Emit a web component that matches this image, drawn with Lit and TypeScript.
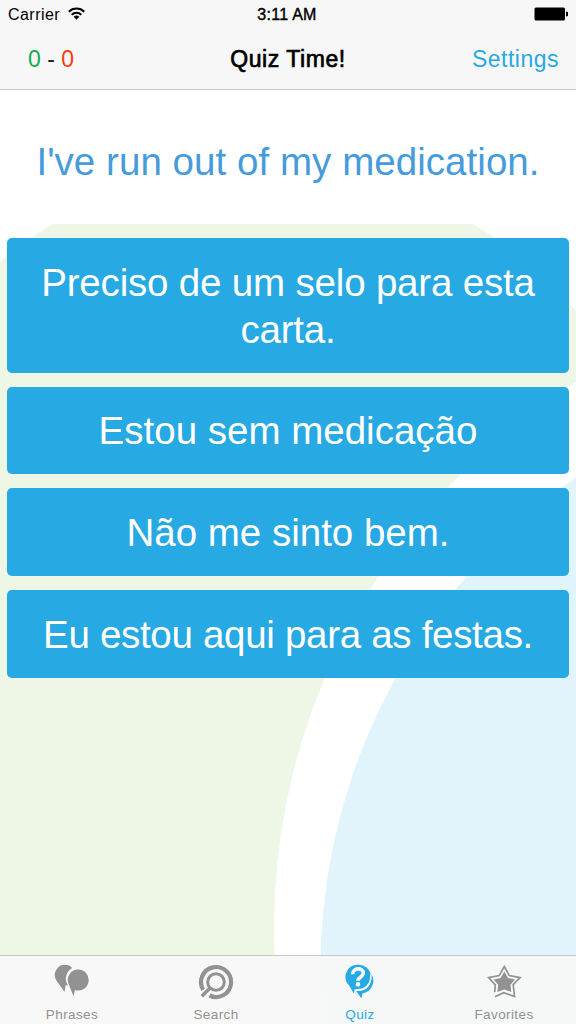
import { LitElement, html, svg, css } from "lit";
import { customElement, property, state } from "lit/decorators.js";
import { classMap } from "lit/directives/class-map.js";
import { styleMap } from "lit/directives/style-map.js";

const icons: Record<string, unknown> = {
  phrases: svg`
    <path d="M11.300 .8c3 0 5.300 1.200 6.900 3.300A12.300 12.300 0 0 0 13.900 21.600l-2.400-.3-.9 6.700L2.700 17A10.300 10.300 0 0 1 11.300 .8z" />
    <path d="M24.300 5.500a10.500 10.500 0 1 1-3.300 20.500L19.500 32.300 14.900 20.800A10.500 10.500 0 0 1 24.300 5.500z" />
  `,
  search: svg`
    <g fill="none" stroke="currentColor">
      <path stroke-width="4.200" d="M5.200 25.800A15 15 0 1 1 11.400 31.500" />
      <circle cx="18" cy="18" r="8.300" stroke-width="3" />
      <path stroke-width="3.600" d="M12.600 23.400L3.800 32.200" />
    </g>
  `,
  quiz: svg`
    <path d="M16 .8a12 12 0 0 1 1.800 24l-5 .5-1 4.200L7 21.200A12 12 0 0 1 16 .8z" />
    <path d="M29.500 10.200A12.500 12.500 0 0 1 20.600 29.200l-1.200 5.200-5.200-7.400C25 28 30.500 20 29.500 10.200z" />
    <g fill="none" stroke="#f6f8f9">
      <path stroke-width="3.600" d="M10.600 10.300c0-7.200 10.800-7 10.700-1-.1 4-5.300 3.300-5.300 7.400" />
      <path stroke-width="1.200" d="M28.600 10.500c1 8.500-4.500 15.500-14.500 16" />
    </g>
    <circle cx="16" cy="20.400" r="2.300" fill="#f6f8f9" />
  `,
  favorites: svg`
    <path
      fill="none"
      stroke="currentColor"
      stroke-width="1.700"
      d="M8.700 28.200L9.300 20.800 2.600 13.600l10.600-2L18.300 2.500l5 9.100 10.800 2-6.900 7 1.300 11.900-10.800-3.800L9 32.800"
    />
    <path d="M18.300 7.500l3.700 6.600 7 1.500-4.500 5.200.8 7.100-7-2.400-6.900 2.400.8-7.100-4.600-5.200 7-1.500z" />
  `,
};

@customElement("status-bar")
export class StatusBar extends LitElement {
  static styles = css`
    :host {
      display: grid;
      grid-template-columns: 1fr auto 1fr;
      align-items: center;
      height: 29px;
      padding: 0 8px;
      font-size: 16px;
      color: #000;
    }

    .carrier {
      display: flex;
      align-items: center;
      gap: 8px;
      letter-spacing: 0.45px;
    }

    .time {
      margin-right: 2px;
      letter-spacing: 0.25px;
      -webkit-text-stroke: 0.4px #000;
    }

    .wifi {
      width: 17px;
      height: 13px;
      margin-top: -2px;
    }

    .battery {
      justify-self: end;
      width: 34px;
      height: 14px;
      margin-top: -1px;
    }
  `;

  render() {
    return html`
      <div class="carrier">
        <span>Carrier</span>
        <svg class="wifi" viewBox="0 0 17 13">
          <g fill="none" stroke="#000" stroke-width="2">
            <path d="M.8 4.700a11 11 0 0 1 15.400 0" />
            <path d="M3.700 7.700a6.900 6.900 0 0 1 9.600 0" />
          </g>
          <path d="M5.700 9.800a4 4 0 0 1 5.600 0L8.500 12.700z" />
        </svg>
      </div>
      <span class="time">3:11 AM</span>
      <svg class="battery" viewBox="0 0 34 14">
        <rect x=".5" y=".5" width="30.500" height="13" rx="1.500" />
        <path d="M32 4.500a2.500 2.500 0 0 1 0 5z" />
      </svg>
    `;
  }
}

@customElement("tab-item")
export class TabItem extends LitElement {
  static styles = css`
    :host {
      flex: 1;
    }

    .tab {
      display: flex;
      flex-direction: column;
      align-items: center;
      width: 100%;
      height: 100%;
      padding: 8px 0 0;
      border: none;
      background: transparent;
      color: #929292;
      font: inherit;
      font-size: 13.5px;
      letter-spacing: 0.4px;
      cursor: pointer;
    }

    .tab.active {
      color: #27a9e3;
    }

    .icon {
      width: 36px;
      height: 36px;
      fill: currentColor;
    }

    .label {
      margin-top: 7px;
      line-height: 16px;
    }
  `;

  @property() name = "";
  @property() icon = "";
  @property({ type: Boolean }) active = false;

  render() {
    return html`
      <button class=${classMap({ tab: true, active: this.active })}>
        <svg class="icon" viewBox="0 0 36 36">${icons[this.icon]}</svg>
        <span class="label">${this.name}</span>
      </button>
    `;
  }
}

@customElement("app-root")
export class AppRoot extends LitElement {
  static styles = css`
    :host {
      display: flex;
      flex-direction: column;
      position: relative;
      isolation: isolate;
      height: 100vh;
      overflow: hidden;
      background: #fff;
      font-family: "Liberation Sans", Arial, sans-serif;
    }

    .backdrop {
      position: absolute;
      inset: 0;
      z-index: -1;
      width: 576px;
      height: 1024px;
    }

    .top {
      box-sizing: border-box;
      height: 90px;
      border-bottom: 1px solid #c9c9c9;
      background: #f7f7f7;
    }

    .nav {
      display: grid;
      grid-template-columns: 1fr auto 1fr;
      align-items: center;
      height: 60px;
      padding: 0 17px 0 28px;
      font-size: 23px;
    }

    .score {
      color: #222;
    }

    .right {
      color: #12ad4b;
    }

    .wrong {
      color: #ff3a10;
    }

    .title {
      margin: 0 11px 0 0;
      font-size: 23px;
      font-weight: normal;
      letter-spacing: 0.55px;
      -webkit-text-stroke: 0.7px #000;
    }

    .settings {
      justify-self: end;
      color: #27a9e3;
      letter-spacing: 0.5px;
    }

    .question {
      display: flex;
      align-items: center;
      justify-content: center;
      height: 134px;
      padding-top: 10px;
      box-sizing: border-box;
      background: rgb(255 255 255 / 0.94);
      color: #459bdb;
      font-size: 38.5px;
      letter-spacing: 0.05px;
    }

    .answers {
      display: flex;
      flex-direction: column;
      flex: 1;
      gap: 14px;
      padding: 14px 7px;
    }

    .answer {
      padding: 21.8px 28px 19.2px;
      border: none;
      border-radius: 5px;
      background: #27a9e3;
      color: #fff;
      font: inherit;
      font-size: 38.5px;
      line-height: 46.8px;
      text-align: center;
      cursor: pointer;
    }

    .tabs {
      display: flex;
      box-sizing: border-box;
      height: 69px;
      border-top: 1px solid #c3c8c9;
      background: rgb(247 247 247 / 0.93);
    }
  `;

  @state()
  private selectedTab = "quiz";

  private answers = [
    { text: "Preciso de um selo para esta carta.", tracking: -0.18 },
    { text: "Estou sem medicação", tracking: 0 },
    { text: "Não me sinto bem.", tracking: 0 },
    { text: "Eu estou aqui para as festas.", tracking: -0.3 },
  ];

  private tabs = [
    { name: "Phrases", icon: "phrases" },
    { name: "Search", icon: "search" },
    { name: "Quiz", icon: "quiz" },
    { name: "Favorites", icon: "favorites" },
  ];

  render() {
    return html`
      <svg class="backdrop" viewBox="0 0 576 1024">
        <path fill="#eef6e6" d="M-147 576a410 410 0 0 1 820 0V1024H-147z" />
        <circle cx="921" cy="929" r="647" fill="#fff" />
        <circle cx="920" cy="968.500" r="599.500" fill="#e1f3fb" />
      </svg>
      <header class="top">
        <status-bar></status-bar>
        <div class="nav">
          <span class="score"><span class="right">0</span> - <span class="wrong">0</span></span>
          <h1 class="title">Quiz Time!</h1>
          <span class="settings">Settings</span>
        </div>
      </header>
      <div class="question">I've run out of my medication.</div>
      <main class="answers">
        ${this.answers.map(
          ({ text, tracking }) => html`<button
            class="answer"
            style=${styleMap({ letterSpacing: `${tracking}px` })}
          >
            ${text}
          </button>`
        )}
      </main>
      <nav class="tabs">
        ${this.tabs.map(
          (tab) => html`<tab-item
            .name=${tab.name}
            .icon=${tab.icon}
            ?active=${this.selectedTab === tab.icon}
            @click=${() => (this.selectedTab = tab.icon)}
          ></tab-item>`
        )}
      </nav>
    `;
  }
}
